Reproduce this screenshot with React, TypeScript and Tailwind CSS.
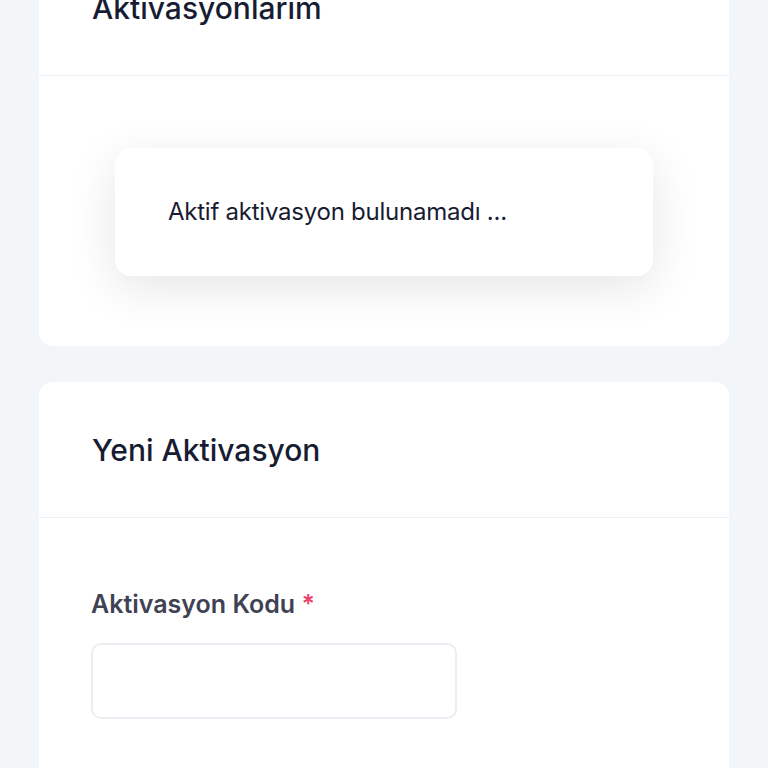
export default function App() {
  return (
    <div
      className="min-h-screen bg-[#f3f6f9] px-[39px] pb-10"
      style={{ fontFamily: "Inter, 'Noto Sans', sans-serif" }}
    >
      <div className="-mt-[60px] flex flex-col gap-[36px]">
        {/* Active activations */}
        <section className="rounded-[14px] bg-white">
          <header className="flex h-[136px] items-center border-b border-[#eff2f5] px-[53px]">
            <h2 className="text-[30px] font-medium leading-[36px] text-[#181c32]">Aktivasyonlarım</h2>
          </header>
          <div className="px-[76px] pt-[72px] pb-[70px]">
            <div className="flex h-[128px] items-center rounded-[16px] bg-white px-[53px] shadow-[0_12px_48px_rgba(0,0,0,0.1)]">
              <p className="text-[24px] leading-[30px] tracking-[-0.01em] text-[#181c32]">Aktif aktivasyon bulunamadı ...</p>
            </div>
          </div>
        </section>

        {/* New activation */}
        <section className="rounded-[14px] bg-white">
          <header className="flex h-[136px] items-center border-b border-[#eff2f5] px-[53px]">
            <h2 className="text-[30px] font-medium leading-[36px] text-[#181c32]">Yeni Aktivasyon</h2>
          </header>
          <div className="px-[52px] pt-[71px] pb-[60px]">
            <label className="block text-[25px] font-semibold leading-[30px] text-[#3f4254]">
              Aktivasyon Kodu <span className="text-[#f1416c]">*</span>
            </label>
            <input
              type="text"
              className="mt-[24px] block h-[76px] w-[366px] rounded-[10px] border-2 border-[#ebedf2] bg-white px-4 text-[20px] outline-none"
            />
          </div>
        </section>
      </div>
    </div>
  );
}
